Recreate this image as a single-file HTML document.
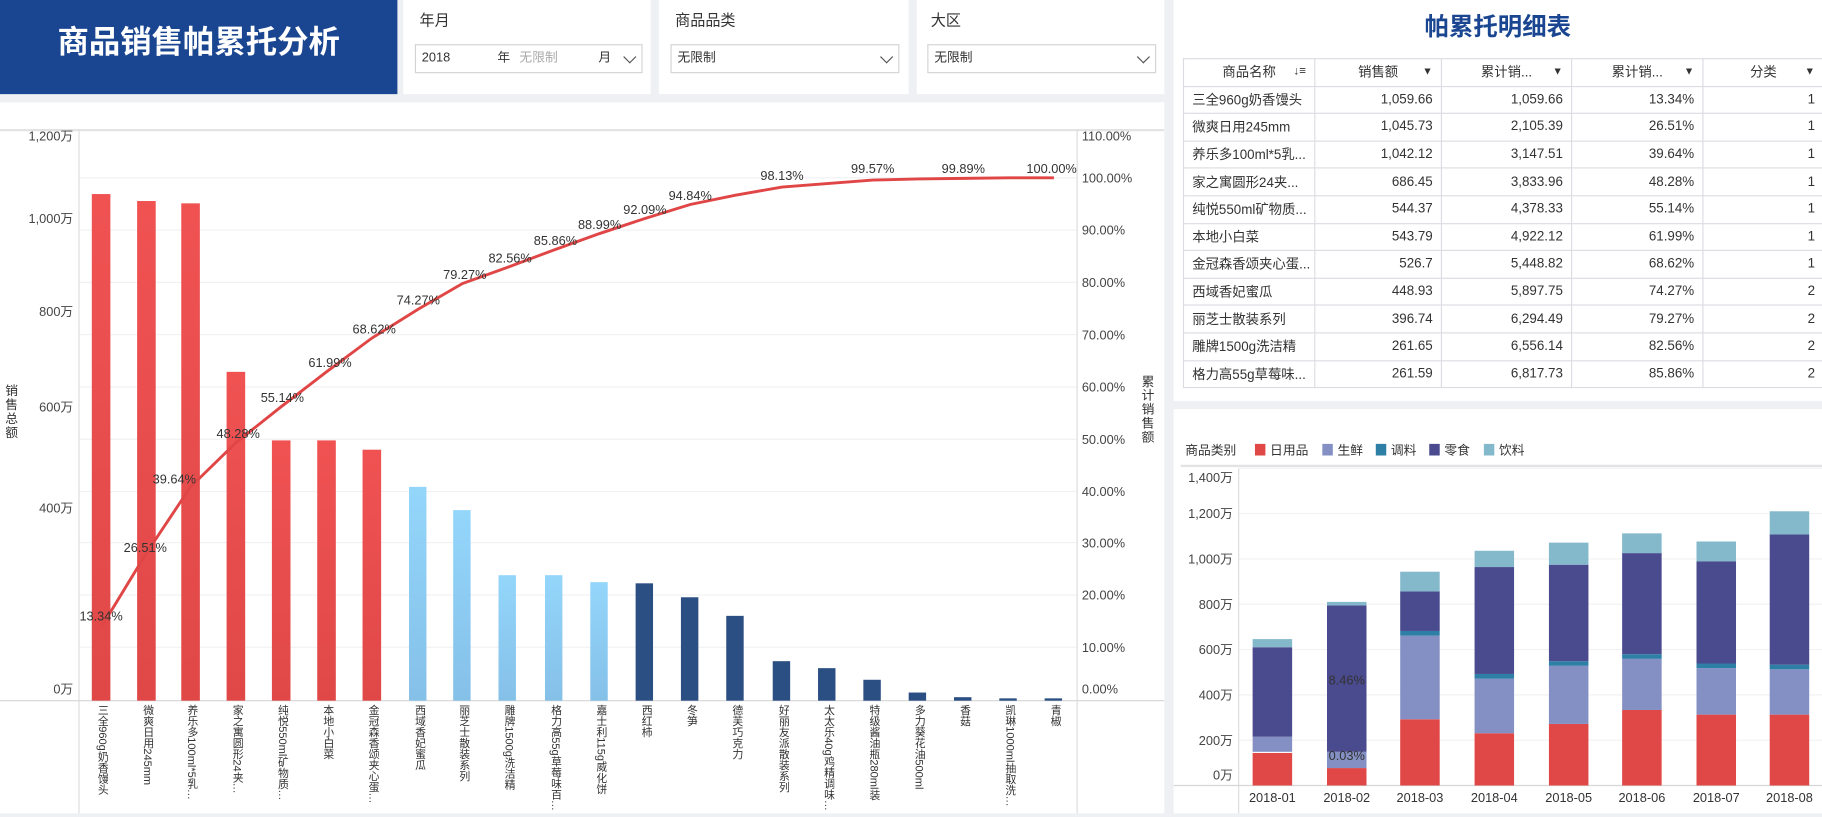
<!DOCTYPE html>
<html><head><meta charset="utf-8">
<style>
html,body{margin:0;padding:0;width:1822px;height:817px;overflow:hidden;background:#eef0f4;}
body{font-family:"Liberation Sans","Noto Sans CJK SC",sans-serif;color:#333;}
#s{position:absolute;left:0;top:0;width:1568px;height:703px;transform:scale(1.16199);transform-origin:0 0;background:#eef0f4;}
.p{position:absolute;background:#fff;}
.lab{position:absolute;font-size:13px;color:#333;}
.dd{position:absolute;height:23px;border:1px solid #d4d4d4;background:#fff;font-size:11px;line-height:23px;}
.chev{position:absolute;top:6px;width:7px;height:7px;border-right:1.3px solid #555;border-bottom:1.3px solid #555;transform:rotate(45deg);}
table{border-collapse:collapse;font-size:11.5px;}
td,th{border:1px solid #dcdde3;height:22.6px;padding:0 7px;white-space:nowrap;font-weight:normal;color:#333;}
th{text-align:center;position:relative;}
th .a{position:absolute;right:7px;top:5px;font-size:9px;}
td.n{text-align:right;}
svg text{font-family:"Liberation Sans","Noto Sans CJK SC",sans-serif;}
.xl{position:absolute;top:0;writing-mode:vertical-rl;line-height:12px;white-space:nowrap;height:92px;overflow:hidden;font-size:9.5px;}
</style></head><body>
<div id="s">
<div class="p" style="left:0;top:0;width:342px;height:81px;background:#1a4590;"></div>
<div style="position:absolute;left:0;top:14px;width:342px;text-align:center;color:#fff;font-weight:bold;font-size:27px;font-family:'Noto Sans CJK SC',sans-serif;">商品销售帕累托分析</div>
<div class="p" style="left:347px;top:0;width:213px;height:81px;"></div>
<div class="p" style="left:567px;top:0;width:215px;height:81px;"></div>
<div class="p" style="left:789px;top:0;width:213px;height:81px;"></div>
<div class="lab" style="left:361px;top:7px;">年月</div>
<div class="lab" style="left:581px;top:7px;">商品品类</div>
<div class="lab" style="left:801px;top:7px;">大区</div>
<div class="dd" style="left:357px;top:38px;width:194px;">
 <span style="position:absolute;left:5px;">2018</span>
 <span style="position:absolute;left:70px;">年</span>
 <span style="position:absolute;left:89px;color:#aaa;">无限制</span>
 <span style="position:absolute;left:157px;">月</span>
 <div class="chev" style="left:180px;"></div></div>
<div class="dd" style="left:577px;top:38px;width:195px;"><span style="position:absolute;left:5px;">无限制</span><div class="chev" style="left:181px;"></div></div>
<div class="dd" style="left:798px;top:38px;width:195px;"><span style="position:absolute;left:5px;">无限制</span><div class="chev" style="left:181px;"></div></div>

<div class="p" style="left:0;top:88px;width:1002px;height:612px;"></div>
<svg style="position:absolute;left:0;top:88px;" width="1002" height="612" viewBox="0 88 1002 612">
<defs>
<linearGradient id="gr" x1="0" y1="0" x2="0" y2="1"><stop offset="0" stop-color="#f05252"/><stop offset="1" stop-color="#e04848"/></linearGradient>
<linearGradient id="gb" x1="0" y1="0" x2="0" y2="1"><stop offset="0" stop-color="#94d6fb"/><stop offset="1" stop-color="#85c0e8"/></linearGradient>
</defs>
<line x1="0" y1="112" x2="1002" y2="112" stroke="#e3e3e6" stroke-width="2"/>
<g stroke="#f1f1f3" stroke-width="1">
<line x1="68" y1="153" x2="927" y2="153"/><line x1="68" y1="198" x2="927" y2="198"/><line x1="68" y1="243" x2="927" y2="243"/><line x1="68" y1="288" x2="927" y2="288"/><line x1="68" y1="333" x2="927" y2="333"/><line x1="68" y1="378" x2="927" y2="378"/><line x1="68" y1="423" x2="927" y2="423"/><line x1="68" y1="467" x2="927" y2="467"/><line x1="68" y1="512" x2="927" y2="512"/><line x1="68" y1="557" x2="927" y2="557"/>
</g>
<line x1="68" y1="112" x2="68" y2="700" stroke="#ddd"/>
<line x1="927" y1="112" x2="927" y2="700" stroke="#ddd"/>
<line x1="0" y1="603" x2="1002" y2="603" stroke="#d6d6d6"/>
<g font-size="11" fill="#444" text-anchor="end">
<text x="63" y="121">1,200万</text><text x="63" y="192">1,000万</text><text x="63" y="272">800万</text><text x="63" y="354">600万</text><text x="63" y="441">400万</text><text x="63" y="597">0万</text>
</g>
<g font-size="11" fill="#444">
<text x="931" y="121">110.00%</text><text x="931" y="157">100.00%</text><text x="931" y="202">90.00%</text><text x="931" y="247">80.00%</text><text x="931" y="292">70.00%</text><text x="931" y="337">60.00%</text><text x="931" y="382">50.00%</text><text x="931" y="427">40.00%</text><text x="931" y="471">30.00%</text><text x="931" y="516">20.00%</text><text x="931" y="561">10.00%</text><text x="931" y="597">0.00%</text>
</g>
<g font-size="11" fill="#333" text-anchor="middle">
<text x="10" y="340">销</text><text x="10" y="352">售</text><text x="10" y="364">总</text><text x="10" y="376">额</text>
<text x="988" y="332">累</text><text x="988" y="344">计</text><text x="988" y="356">销</text><text x="988" y="368">售</text><text x="988" y="380">额</text>
</g>
<g fill="url(#gr)">
<rect x="79" y="167" width="16" height="436"/><rect x="118" y="173" width="16" height="430"/><rect x="156" y="175" width="16" height="428"/><rect x="195" y="320" width="16" height="283"/><rect x="234" y="379" width="16" height="224"/><rect x="273" y="379" width="16" height="224"/><rect x="312" y="387" width="16" height="216"/>
</g>
<g fill="url(#gb)">
<rect x="352" y="419" width="15" height="184"/><rect x="390" y="439" width="15" height="164"/><rect x="429" y="495" width="15" height="108"/><rect x="469" y="495" width="15" height="108"/><rect x="508" y="501" width="15" height="102"/>
</g>
<g fill="#2b4f82">
<rect x="547" y="502" width="15" height="101"/><rect x="586" y="514" width="15" height="89"/><rect x="625" y="530" width="15" height="73"/><rect x="665" y="569" width="15" height="34"/><rect x="704" y="575" width="15" height="28"/><rect x="743" y="585" width="15" height="18"/><rect x="782" y="596" width="15" height="7"/><rect x="821" y="600" width="15" height="3"/><rect x="860" y="601" width="15" height="2"/><rect x="899" y="601" width="15" height="2"/>
</g>
<polyline fill="none" stroke="#e04646" stroke-width="2.5" points="87,540 126,476 164,419 203,381 242,350 281,320 320,291 360,266 398,244 437,230 477,215 516,201 555,188 594,176 633,168 673,161 712,158 751,155 790,154 829,153.5 868,153 907,153"/>
<g font-size="11" fill="#333" text-anchor="middle">
<text x="87" y="534">13.34%</text><text x="125" y="475">26.51%</text><text x="150" y="416">39.64%</text><text x="205" y="377">48.28%</text><text x="243" y="346">55.14%</text><text x="284" y="316">61.99%</text><text x="322" y="287">68.62%</text><text x="360" y="262">74.27%</text><text x="400" y="240">79.27%</text><text x="439" y="226">82.56%</text><text x="478" y="211">85.86%</text><text x="516" y="197">88.99%</text><text x="555" y="184">92.09%</text><text x="594" y="172">94.84%</text><text x="673" y="155">98.13%</text><text x="751" y="149">99.57%</text><text x="829" y="149">99.89%</text><text x="905" y="149">100.00%</text>
</g>
</svg>
<div style="position:absolute;left:0;top:606px;width:1002px;height:94px;color:#333;">
<div class="xl" style="left:81px;">三全960g奶香馒头</div>
<div class="xl" style="left:120px;">微爽日用245mm</div>
<div class="xl" style="left:158px;">养乐多100ml*5乳…</div>
<div class="xl" style="left:197px;">家之寓圆形24夹…</div>
<div class="xl" style="left:236px;">纯悦550ml矿物质…</div>
<div class="xl" style="left:275px;">本地小白菜</div>
<div class="xl" style="left:314px;">金冠森香颂夹心蛋…</div>
<div class="xl" style="left:354px;">西域香妃蜜瓜</div>
<div class="xl" style="left:392px;">丽芝士散装系列</div>
<div class="xl" style="left:431px;">雕牌1500g洗洁精</div>
<div class="xl" style="left:471px;">格力高55g草莓味百…</div>
<div class="xl" style="left:510px;">嘉士利115g威化饼</div>
<div class="xl" style="left:549px;">西红柿</div>
<div class="xl" style="left:588px;">冬笋</div>
<div class="xl" style="left:627px;">德芙巧克力</div>
<div class="xl" style="left:667px;">好丽友派散装系列</div>
<div class="xl" style="left:706px;">太太乐40g鸡精调味…</div>
<div class="xl" style="left:745px;">特级酱油瓶280ml装</div>
<div class="xl" style="left:784px;">多力葵花油500ml</div>
<div class="xl" style="left:823px;">香菇</div>
<div class="xl" style="left:862px;">凯琳1000ml抽取洗…</div>
<div class="xl" style="left:901px;">青椒</div>
</div>

<div class="p" style="left:1010px;top:0;width:558px;height:345px;"></div>
<div style="position:absolute;left:1010px;top:7px;width:558px;text-align:center;color:#1a4590;font-weight:bold;font-size:21px;font-family:'Noto Sans CJK SC',sans-serif;">帕累托明细表</div>
<table style="position:absolute;left:1018px;top:50px;width:551px;table-layout:fixed;">
<colgroup><col style="width:113px"><col style="width:109px"><col style="width:112px"><col style="width:113px"><col style="width:104px"></colgroup>
<tr><th>商品名称 <span class="a" style="font-size:10px;">↓≡</span></th><th>销售额<span class="a">▼</span></th><th>累计销...<span class="a">▼</span></th><th>累计销...<span class="a">▼</span></th><th>分类<span class="a">▼</span></th></tr>
<tr><td>三全960g奶香馒头</td><td class="n">1,059.66</td><td class="n">1,059.66</td><td class="n">13.34%</td><td class="n">1</td></tr>
<tr><td>微爽日用245mm</td><td class="n">1,045.73</td><td class="n">2,105.39</td><td class="n">26.51%</td><td class="n">1</td></tr>
<tr><td>养乐多100ml*5乳...</td><td class="n">1,042.12</td><td class="n">3,147.51</td><td class="n">39.64%</td><td class="n">1</td></tr>
<tr><td>家之寓圆形24夹...</td><td class="n">686.45</td><td class="n">3,833.96</td><td class="n">48.28%</td><td class="n">1</td></tr>
<tr><td>纯悦550ml矿物质...</td><td class="n">544.37</td><td class="n">4,378.33</td><td class="n">55.14%</td><td class="n">1</td></tr>
<tr><td>本地小白菜</td><td class="n">543.79</td><td class="n">4,922.12</td><td class="n">61.99%</td><td class="n">1</td></tr>
<tr><td>金冠森香颂夹心蛋...</td><td class="n">526.7</td><td class="n">5,448.82</td><td class="n">68.62%</td><td class="n">1</td></tr>
<tr><td>西域香妃蜜瓜</td><td class="n">448.93</td><td class="n">5,897.75</td><td class="n">74.27%</td><td class="n">2</td></tr>
<tr><td>丽芝士散装系列</td><td class="n">396.74</td><td class="n">6,294.49</td><td class="n">79.27%</td><td class="n">2</td></tr>
<tr><td>雕牌1500g洗洁精</td><td class="n">261.65</td><td class="n">6,556.14</td><td class="n">82.56%</td><td class="n">2</td></tr>
<tr><td>格力高55g草莓味...</td><td class="n">261.59</td><td class="n">6,817.73</td><td class="n">85.86%</td><td class="n">2</td></tr>
</table>

<div class="p" style="left:1010px;top:352px;width:558px;height:348px;"></div>
<svg style="position:absolute;left:1010px;top:352px;" width="558" height="348" viewBox="1010 352 558 348">
<g font-size="11" fill="#333">
<text x="1020" y="391">商品类别</text>
<rect x="1080" y="382" width="9" height="10" fill="#e04848"/><text x="1093" y="391">日用品</text>
<rect x="1138" y="382" width="9" height="10" fill="#8490c4"/><text x="1151" y="391">生鲜</text>
<rect x="1184" y="382" width="9" height="10" fill="#2e7fa6"/><text x="1197" y="391">调料</text>
<rect x="1230" y="382" width="9" height="10" fill="#4a4a8e"/><text x="1243" y="391">零食</text>
<rect x="1277" y="382" width="9" height="10" fill="#84b9cc"/><text x="1290" y="391">饮料</text>
</g>
<line x1="1016" y1="401" x2="1568" y2="401" stroke="#e3e3e6" stroke-width="2"/>
<g stroke="#f2f2f4"><line x1="1066" y1="403" x2="1568" y2="403"/><line x1="1066" y1="442" x2="1568" y2="442"/><line x1="1066" y1="481" x2="1568" y2="481"/><line x1="1066" y1="520" x2="1568" y2="520"/><line x1="1066" y1="559" x2="1568" y2="559"/><line x1="1066" y1="598" x2="1568" y2="598"/><line x1="1066" y1="637" x2="1568" y2="637"/></g>
<line x1="1066" y1="403" x2="1066" y2="700" stroke="#ddd"/>
<line x1="1010" y1="676" x2="1568" y2="676" stroke="#d6d6d6"/>
<g font-size="11" fill="#444" text-anchor="end">
<text x="1061" y="415">1,400万</text><text x="1061" y="446">1,200万</text><text x="1061" y="485">1,000万</text><text x="1061" y="524">800万</text><text x="1061" y="563">600万</text><text x="1061" y="602">400万</text><text x="1061" y="641">200万</text><text x="1061" y="671">0万</text>
</g>
<g>
<rect x="1078" y="648" width="34" height="28" fill="#e04848"/><rect x="1078" y="634" width="34" height="13" fill="#8490c4"/><rect x="1078" y="557" width="34" height="77" fill="#4a4a8e"/><rect x="1078" y="550" width="34" height="7" fill="#84b9cc"/>
<rect x="1142" y="661" width="34" height="15" fill="#e04848"/><rect x="1142" y="647" width="34" height="14" fill="#8490c4"/><rect x="1142" y="521" width="34" height="126" fill="#4a4a8e"/><rect x="1142" y="518" width="34" height="3" fill="#84b9cc"/>
<rect x="1205" y="619" width="34" height="57" fill="#e04848"/><rect x="1205" y="547" width="34" height="72" fill="#8490c4"/><rect x="1205" y="543" width="34" height="4" fill="#2e7fa6"/><rect x="1205" y="509" width="34" height="34" fill="#4a4a8e"/><rect x="1205" y="492" width="34" height="17" fill="#84b9cc"/>
<rect x="1269" y="631" width="34" height="45" fill="#e04848"/><rect x="1269" y="584" width="34" height="47" fill="#8490c4"/><rect x="1269" y="580" width="34" height="4" fill="#2e7fa6"/><rect x="1269" y="488" width="34" height="92" fill="#4a4a8e"/><rect x="1269" y="474" width="34" height="14" fill="#84b9cc"/>
<rect x="1333" y="623" width="34" height="53" fill="#e04848"/><rect x="1333" y="573" width="34" height="50" fill="#8490c4"/><rect x="1333" y="569" width="34" height="4" fill="#2e7fa6"/><rect x="1333" y="486" width="34" height="83" fill="#4a4a8e"/><rect x="1333" y="467" width="34" height="19" fill="#84b9cc"/>
<rect x="1396" y="611" width="34" height="65" fill="#e04848"/><rect x="1396" y="567" width="34" height="44" fill="#8490c4"/><rect x="1396" y="563" width="34" height="4" fill="#2e7fa6"/><rect x="1396" y="476" width="34" height="87" fill="#4a4a8e"/><rect x="1396" y="459" width="34" height="17" fill="#84b9cc"/>
<rect x="1460" y="615" width="34" height="61" fill="#e04848"/><rect x="1460" y="575" width="34" height="40" fill="#8490c4"/><rect x="1460" y="571" width="34" height="4" fill="#2e7fa6"/><rect x="1460" y="483" width="34" height="88" fill="#4a4a8e"/><rect x="1460" y="466" width="34" height="17" fill="#84b9cc"/>
<rect x="1523" y="615" width="34" height="61" fill="#e04848"/><rect x="1523" y="576" width="34" height="39" fill="#8490c4"/><rect x="1523" y="572" width="34" height="4" fill="#2e7fa6"/><rect x="1523" y="460" width="34" height="112" fill="#4a4a8e"/><rect x="1523" y="440" width="34" height="20" fill="#84b9cc"/>
</g>
<g font-size="11" fill="#333" text-anchor="middle">
<text x="1159" y="589">8.46%</text><text x="1159" y="654">0.03%</text>
<text x="1095" y="690">2018-01</text><text x="1159" y="690">2018-02</text><text x="1222" y="690">2018-03</text><text x="1286" y="690">2018-04</text><text x="1350" y="690">2018-05</text><text x="1413" y="690">2018-06</text><text x="1477" y="690">2018-07</text><text x="1540" y="690">2018-08</text>
</g>
</svg>
</div>
</body></html>
